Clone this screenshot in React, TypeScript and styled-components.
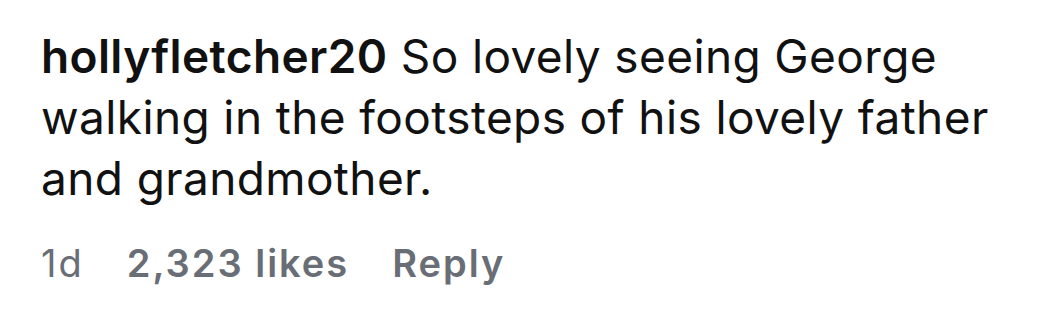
import React from "react";
import styled, { createGlobalStyle } from "styled-components";

const Global = createGlobalStyle`
  html, body { margin: 0; padding: 0; background: #ffffff; }
  body { font-family: Inter, "Noto Sans", sans-serif; -webkit-font-smoothing: antialiased; }
`;

const Comment = styled.div`
  width: 1048px;
  height: 322px;
  box-sizing: border-box;
  padding: 26px 40px 0 41px;
  display: flex;
  flex-direction: column;
`;

const Body = styled.p`
  margin: 0;
  font-size: 46px;
  line-height: 61px;
  color: #111111;
  font-weight: 400;
  letter-spacing: 0.38px;
  width: 966px;
`;

const Username = styled.span`
  font-weight: 600;
`;

const Meta = styled.div`
  display: flex;
  align-items: baseline;
  gap: 43px;
  margin-top: 32px;
  font-size: 38px;
  line-height: 44px;
  letter-spacing: 2px;
  color: #696d75;
`;

const MetaItem = styled.span<{ $bold?: boolean }>`
  font-weight: ${(p) => (p.$bold ? 600 : 400)};
`;

export default function App() {
  return (
    <>
      <Global />
      <Comment>
        <Body>
          <Username>hollyfletcher20</Username> So lovely seeing George walking in the footsteps of his lovely father and grandmother.
        </Body>
        <Meta>
          <MetaItem>1d</MetaItem>
          <MetaItem $bold>2,323 likes</MetaItem>
          <MetaItem $bold>Reply</MetaItem>
        </Meta>
      </Comment>
    </>
  );
}
